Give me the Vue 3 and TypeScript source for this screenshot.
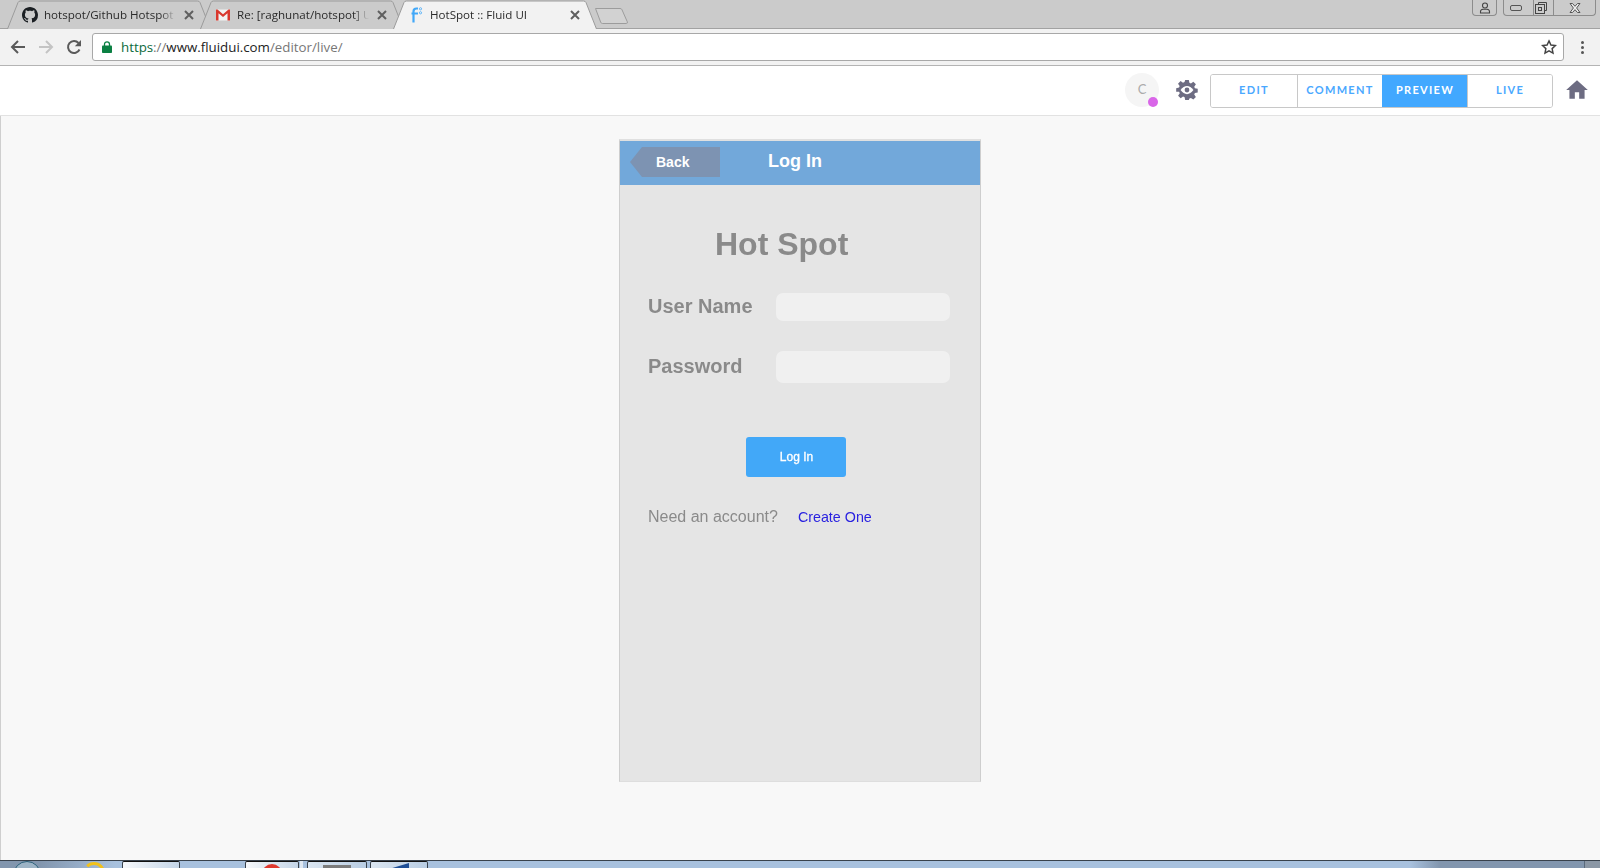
<template>
  <div class="screen">
    <div class="tabstrip">
      <div v-for="(tab, i) in tabs" :key="tab.title" class="tab" :class="{ active: i === activeTab }">
        <svg class="tab-shape" width="204" height="29" viewBox="0 0 204 29">
          <path d="M.5 29 11 2.500Q11.600 1 13.500 1h177q1.900 0 2.500 1.500L203.500 29" />
        </svg>
        <span class="favicon">
          <svg v-if="tab.icon === 'github'" width="16" height="16" viewBox="0 0 16 16" fill="#1b1f23">
            <path d="M8 0C3.580 0 0 3.580 0 8c0 3.540 2.290 6.530 5.470 7.590.4.070.55-.17.55-.38 0-.19-.01-.82-.01-1.490-2.010.37-2.530-.49-2.690-.94-.09-.23-.48-.94-.82-1.130-.28-.15-.68-.52-.01-.53.63-.01 1.080.58 1.230.82.72 1.210 1.870.87 2.330.66.07-.52.28-.87.51-1.070-1.780-.2-3.640-.89-3.640-3.950 0-.87.31-1.590.82-2.150-.08-.2-.36-1.020.08-2.120 0 0 .67-.21 2.200.82.64-.18 1.320-.27 2-.27s1.360.09 2 .27c1.530-1.040 2.200-.82 2.200-.82.44 1.100.16 1.920.08 2.120.51.56.82 1.270.82 2.150 0 3.070-1.870 3.750-3.650 3.950.29.25.54.73.54 1.480 0 1.070-.01 1.930-.01 2.200 0 .21.15.46.55.38A8.010 8.010 0 0 0 16 8c0-4.420-3.580-8-8-8z" />
          </svg>
          <svg v-else-if="tab.icon === 'gmail'" width="16" height="16" viewBox="0 0 16 16">
            <rect x="1" y="2.500" width="14" height="11" fill="#f2f2f2" />
            <path d="M1 13.500V2.500h1.500L8 7.200l5.500-4.700H15v11h-2.500V6.300L8 10 3.500 6.300v7.200z" fill="#d9382e" />
          </svg>
          <svg v-else width="16" height="16" viewBox="0 0 16 16" fill="none" stroke="#42a8f8" stroke-width="2.200">
            <path d="M5.500 15.500V4.500Q5.500 1.500 8.500 1.500H10M3.500 6.500h6.500" />
            <circle cx="12.500" cy="1.800" r="1.100" stroke-width=".8" />
            <circle cx="12.500" cy="5.800" r="1.100" stroke-width=".8" />
          </svg>
        </span>
        <span class="tab-title">{{ tab.title }}</span>
        <svg class="tab-close" width="10" height="10" viewBox="0 0 10 10" stroke="#5f5f5f" stroke-width="2">
          <path d="M1 1l8 8M9 1 1 9" />
        </svg>
      </div>
      <svg class="newtab" width="33" height="18" viewBox="0 0 33 18">
        <path d="M.5 1.500h24.500q1.500 0 2 1.300l5.300 12q.5 1.700-1 1.700H7.500q-1.300 0-1.800-1.300z" fill="#d2d2d2" stroke="#9c9c9c" />
      </svg>
      <div class="winctl">
        <div class="win-btn user">
          <svg width="12" height="12" viewBox="0 0 12 12" fill="none" stroke="#444" stroke-width="1.100">
            <circle cx="6" cy="3.500" r="2.500" />
            <path d="M1.500 11V9.500Q1.500 7.500 4 7.200h4Q10.500 7.500 10.500 9.500V11z" />
          </svg>
        </div>
        <div class="win-group">
          <div class="win-btn min">
            <svg width="12" height="6" viewBox="0 0 12 6" fill="none" stroke="#555"><rect x=".5" y=".5" width="11" height="5" rx="1.500" /></svg>
          </div>
          <div class="win-btn max">
            <svg width="12" height="12" viewBox="0 0 12 12" fill="none" stroke="#444"><path d="M3.500 2.500V.5h8v8H9.500" /><rect x=".5" y="2.500" width="9" height="9" /><rect x="3.500" y="5.500" width="3" height="3" /></svg>
          </div>
          <div class="win-btn close">
            <svg width="12" height="10" viewBox="0 0 12 10" fill="#eee" stroke="#555"><path d="M1 .5h2.500L6 3.300 8.500.5H11L7.600 5 11 9.500H8.500L6 6.700 3.500 9.500H1L4.400 5z" /></svg>
          </div>
        </div>
      </div>
    </div>

    <div class="toolbar">
      <svg class="nav" width="16" height="16" viewBox="0 0 16 16" fill="none" stroke="#5a5a5a" stroke-width="2">
        <path d="M15 8H2M8 2 2 8l6 6" />
      </svg>
      <svg class="nav" width="16" height="16" viewBox="0 0 16 16" fill="none" stroke="#c4c4c4" stroke-width="2">
        <path d="M1 8h13M8 2l6 6-6 6" />
      </svg>
      <svg class="nav" width="16" height="16" viewBox="0 0 16 16" fill="none">
        <path d="M13.500 10.500A6 6 0 1 1 12.500 4" stroke="#5a5a5a" stroke-width="2" />
        <path d="M15 1v6.200H8.800z" fill="#5a5a5a" />
      </svg>
      <div class="omnibox">
        <svg width="10" height="12" viewBox="0 0 10 12">
          <path d="M2.500 5V3.300a2.500 2.500 0 0 1 5 0V5" fill="none" stroke="#0b8043" stroke-width="1.300" />
          <rect y="4.500" width="10" height="7.500" rx=".8" fill="#0b8043" />
        </svg>
        <span class="url"><span class="scheme">https</span><span class="dim">://</span>www.fluidui.com<span class="dim">/editor/live/</span></span>
        <svg class="star" width="16" height="16" viewBox="0 0 24 24" fill="none" stroke="#444" stroke-width="2.200">
          <path d="M12 2.800l2.900 6.200 6.800.8-5 4.600 1.300 6.700-6-3.400-6 3.400 1.300-6.700-5-4.600 6.800-.8z" />
        </svg>
      </div>
      <div class="kebab"><i></i><i></i><i></i></div>
    </div>

    <header class="appbar">
      <div class="avatar">C<span class="presence"></span></div>
      <svg class="gear" width="22" height="22" viewBox="0 0 24 24">
        <path fill-rule="evenodd" d="M10 1h4l.6 3.100 1.700.7 2.600-1.800 2.800 2.800-1.800 2.600.7 1.700 3.100.6v4l-3.100.6-.7 1.700 1.800 2.600-2.800 2.800-2.600-1.800-1.700.7L14 23h-4l-.6-3.100-1.700-.7-2.600 1.800-2.800-2.800 1.800-2.600-.7-1.700L.2 14v-4l3.100-.6.7-1.700L2.200 5.100 5 2.300l2.600 1.800 1.700-.7z" fill="#6d6c82" />
        <path d="M5 12q3.200-4.500 7-4.500T19 12q-3.200 4.500-7 4.500T5 12z" fill="#fff" />
        <circle cx="12" cy="12" r="2.600" fill="#6d6c82" />
      </svg>
      <nav class="modes">
        <button v-for="mode in modes" :key="mode" class="mode" :class="{ on: mode === activeMode }">{{ mode }}</button>
      </nav>
      <svg class="home" width="26" height="26" viewBox="0 0 24 24" fill="#6d6c82">
        <path d="M10 20v-6h4v6h5v-8h3L12 3 2 12h3v8z" />
      </svg>
    </header>

    <main class="stage">
      <section class="phone">
        <div class="phone-head">
          <button class="back">Back</button>
          <h2 class="phone-title">Log In</h2>
        </div>
        <div class="phone-body">
          <h1 class="brand">Hot Spot</h1>
          <label class="field first">
            <span>User Name</span>
            <input class="short" type="text" />
          </label>
          <label class="field">
            <span>Password</span>
            <input type="password" />
          </label>
          <button class="login">Log In</button>
          <p class="signup">Need an account?<a href="#">Create One</a></p>
        </div>
      </section>
    </main>

    <footer class="taskbar">
      <span class="orb"></span>
      <span class="ie"></span>
      <span class="task t1"></span>
      <span class="task t2"><b class="chrome"></b></span>
      <span class="tick"></span>
      <span class="task t3"><b class="grey"></b></span>
      <span class="task t4"><b class="wedge"></b></span>
      <span class="desktop"></span>
    </footer>
  </div>
</template>

<script setup lang="ts">
const tabs = [
  { title: 'hotspot/Github Hotspot :: Fluid', icon: 'github' },
  { title: 'Re: [raghunat/hotspot] UI Mockups', icon: 'gmail' },
  { title: 'HotSpot :: Fluid UI', icon: 'fluid' },
]
const activeTab = 2

const modes = ['Edit', 'Comment', 'Preview', 'Live']
const activeMode = 'Preview'
</script>

<style>
html, body { margin: 0; background: #f8f8f8; }
</style>

<style scoped>
.screen {
  width: 1600px;
  height: 868px;
  display: flex;
  flex-direction: column;
  overflow: hidden;
  font-family: "Liberation Sans", Arial, sans-serif;
}

/* browser chrome */
.tabstrip {
  height: 29px;
  flex: none;
  display: flex;
  align-items: flex-start;
  padding-left: 7px;
  box-sizing: border-box;
  background: #cbcbcb;
  box-shadow: inset 0 -1px 0 #a2a2a2;
}
.tab {
  position: relative;
  width: 204px;
  height: 29px;
  flex: none;
  margin-right: -11px;
  padding-left: 15px;
  box-sizing: border-box;
  display: flex;
  align-items: center;
  font-family: "Open Sans", sans-serif;
  font-size: 11.600px;
  color: #2b2b2b;
}
.tab-shape {
  position: absolute;
  left: 0;
  top: 0;
}
.tab-shape path {
  fill: #cbcbcb;
  stroke: #9b9b9b;
}
.tab.active { z-index: 2; }
.tab.active .tab-shape path { fill: #f2f2f2; }
.favicon {
  position: relative;
  width: 16px;
  height: 16px;
  display: flex;
}
.tab-title {
  position: relative;
  width: 132px;
  margin-left: 6px;
  white-space: nowrap;
  overflow: hidden;
  -webkit-mask-image: linear-gradient(to right, #000 88%, transparent);
  mask-image: linear-gradient(to right, #000 88%, transparent);
}
.tab-close {
  position: relative;
  margin-left: 8px;
}
.newtab {
  position: relative;
  z-index: 1;
  margin: 7px 0 0 9px;
  flex: none;
}
.winctl {
  margin-left: auto;
  margin-right: 4px;
  display: flex;
  gap: 6px;
}
.win-btn {
  height: 16px;
  display: flex;
  align-items: center;
  justify-content: center;
  box-sizing: border-box;
}
.win-btn.user,
.win-group {
  border: 1px solid #8c8c8c;
  border-top: 0;
  border-radius: 0 0 4px 4px;
  box-sizing: border-box;
  height: 16px;
}
.win-btn.user { width: 25px; }
.win-group { display: flex; }
.min { width: 29px; padding-right: 5px; }
.max { width: 21px; padding-right: 5px; border-left: 1px solid #8c8c8c; border-right: 1px solid #8c8c8c; }
.close { width: 41px; }

.toolbar {
  height: 37px;
  flex: none;
  box-sizing: border-box;
  border-bottom: 1px solid #b4b4b4;
  background: #f2f2f2;
  display: flex;
  align-items: center;
  padding-left: 10px;
}
.nav { flex: none; margin-right: 12px; }
.omnibox {
  width: 1472px;
  height: 28px;
  margin-left: -2px;
  box-sizing: border-box;
  background: #fff;
  border: 1px solid #a8a8a8;
  border-radius: 3px;
  display: flex;
  align-items: center;
  padding: 0 6px 0 9px;
}
.url {
  margin-left: 9px;
  font-family: "Open Sans", sans-serif;
  font-size: 13.300px;
  color: #222;
}
.scheme { color: #0b6b3c; }
.dim { color: #777; }
.star { margin-left: auto; }
.kebab {
  margin-left: 17px;
  display: flex;
  flex-direction: column;
  gap: 2px;
}
.kebab i {
  width: 3px;
  height: 3px;
  border-radius: 50%;
  background: #555;
}

/* app header */
.appbar {
  height: 50px;
  flex: none;
  box-sizing: border-box;
  border-bottom: 1px solid #e2e2e2;
  background: #fff;
  display: flex;
  align-items: center;
  justify-content: flex-end;
  padding: 1px 10px 0 0;
}
.avatar {
  position: relative;
  width: 34px;
  height: 34px;
  margin-top: -2px;
  border-radius: 50%;
  background: #f5f5f5;
  color: #aaa;
  font-family: Lato, sans-serif;
  font-size: 13px;
  line-height: 32px;
  text-align: center;
}
.presence {
  position: absolute;
  right: 1px;
  bottom: 0;
  width: 10px;
  height: 10px;
  border-radius: 50%;
  background: #d966e8;
}
.gear { margin: -2px 12px 0 17px; }
.modes {
  width: 343px;
  height: 34px;
  box-sizing: border-box;
  border: 1px solid #c8c8c8;
  border-radius: 3px;
  display: grid;
  grid-template-columns: 86px 85px 85px 85px;
  overflow: hidden;
}
.mode {
  border: 0;
  border-left: 1px solid #c8c8c8;
  background: #fff;
  color: #4aa8ff;
  font-family: Lato, sans-serif;
  font-size: 11px;
  font-weight: 700;
  letter-spacing: 1.300px;
  text-transform: uppercase;
  padding: 0 0 4px;
}
.mode:first-child { border-left: 0; }
.mode.on {
  border-left-color: #42a8ff;
  background: #42a8ff;
  color: #fff;
}
.home { margin: -2px 0 0 11px; }

/* canvas */
.stage {
  flex: 1;
  min-height: 0;
  box-sizing: border-box;
  border-left: 1px solid #cfcfcf;
  background: #f8f8f8;
  padding-top: 23px;
}
.phone {
  width: 362px;
  height: 643px;
  margin-left: 618px;
  box-sizing: border-box;
  border: 1px solid #cecece;
  border-top: 2px solid #e0e0e0;
  border-bottom-color: #dedede;
  background: #e5e5e5;
}
.phone-head {
  height: 44px;
  box-sizing: border-box;
  padding: 6px 0 0 10px;
  display: flex;
  align-items: flex-start;
  background: #72a8da;
}
.back {
  width: 90px;
  height: 30px;
  border: 0;
  padding: 0 0 0 26px;
  text-align: left;
  background: #7d93b2;
  clip-path: polygon(0 50%, 12px 0, 100% 0, 100% 100%, 12px 100%);
  color: #fff;
  font: bold 14px "Liberation Sans", Arial, sans-serif;
}
.phone-title {
  margin: 0 0 0 48px;
  color: #fff;
  font-size: 18px;
  font-weight: 700;
  line-height: 28px;
}
.phone-body {
  padding-top: 39px;
  color: #8a8a8a;
  /* own layer: the reference has grey, not subpixel, text here */
  will-change: transform;
}
.brand {
  margin: 0 0 0 95px;
  font-size: 32px;
  font-weight: 700;
  line-height: 40px;
}
.field {
  display: flex;
  align-items: center;
  margin: 30px 0 0 28px;
  font-size: 20px;
  font-weight: 700;
}
.field.first { margin-top: 29px; }
.field span {
  width: 128px;
  padding-bottom: 2px;
}
.field input {
  width: 174px;
  height: 32px;
  border: 0;
  padding: 0;
  border-radius: 7px;
  background: #f0f0f0;
}
.field input.short { height: 28px; }
.login {
  display: block;
  width: 100px;
  height: 40px;
  margin: 54px 0 0 126px;
  border: 0;
  padding: 0 0 0 1px;
  border-radius: 3px;
  background: #42a8f8;
  color: #fff;
  font: 12px "Liberation Sans", Arial, sans-serif;
  -webkit-text-stroke: .3px #fff;
}
.signup {
  margin: 29px 0 0 28px;
  font-size: 16px;
  line-height: 22px;
}
.signup a {
  margin-left: 20px;
  color: #2a22e0;
  font-size: 14.300px;
  text-decoration: none;
}

/* os taskbar */
.taskbar {
  position: relative;
  height: 8px;
  flex: none;
  box-sizing: border-box;
  border-top: 1px solid #39424c;
  display: flex;
  background: linear-gradient(to right, #8296ae 0, #8296ae 40px, #a8c1de 115px, #a8c1de 1410px, #8296ae 1440px);
  overflow: hidden;
}
.orb {
  width: 28px;
  height: 28px;
  margin: 0 0 0 13px;
  box-sizing: border-box;
  border: 1px solid #2a5f78;
  border-radius: 50%;
  background: #9db4c6;
  flex: none;
}
.ie {
  width: 22px;
  height: 22px;
  margin: 1px 0 0 42px;
  box-sizing: border-box;
  border: 3px solid transparent;
  border-top-color: #f2c21b;
  border-right-color: #f2c21b;
  border-radius: 50%;
  flex: none;
}
.task {
  flex: none;
  display: flex;
  justify-content: center;
  border: 1px solid #39424c;
  border-top-color: #111;
  border-radius: 2px 2px 0 0;
  box-sizing: border-box;
  height: 10px;
  background: linear-gradient(to right, #f6f8fb, #c4d5e8);
}
.t1 { width: 58px; margin-left: 17px; }
.t2 { width: 54px; margin-left: 65px; }
.tick { width: 3px; margin-left: 1px; background: #dfe8f2; flex: none; }
.t3 { width: 60px; margin-left: 4px; background: linear-gradient(to right, #dbe6f1, #b9cde3); }
.t4 { width: 58px; margin-left: 3px; background: linear-gradient(to right, #dbe6f1, #b9cde3); }
.chrome { width: 20px; height: 20px; margin-top: 2px; border-radius: 50%; background: #e0392e; }
.grey { width: 28px; height: 6px; margin-top: 3px; background: #7c7c7c; }
.wedge { width: 20px; height: 6px; margin-top: 1px; background: #1f4f96; clip-path: polygon(100% 0, 100% 100%, 0 100%); }
.desktop {
  position: absolute;
  right: 0;
  top: 0;
  width: 15px;
  height: 7px;
  border-left: 1px solid #5a6a7c;
  background: #8b97a5;
}
</style>
